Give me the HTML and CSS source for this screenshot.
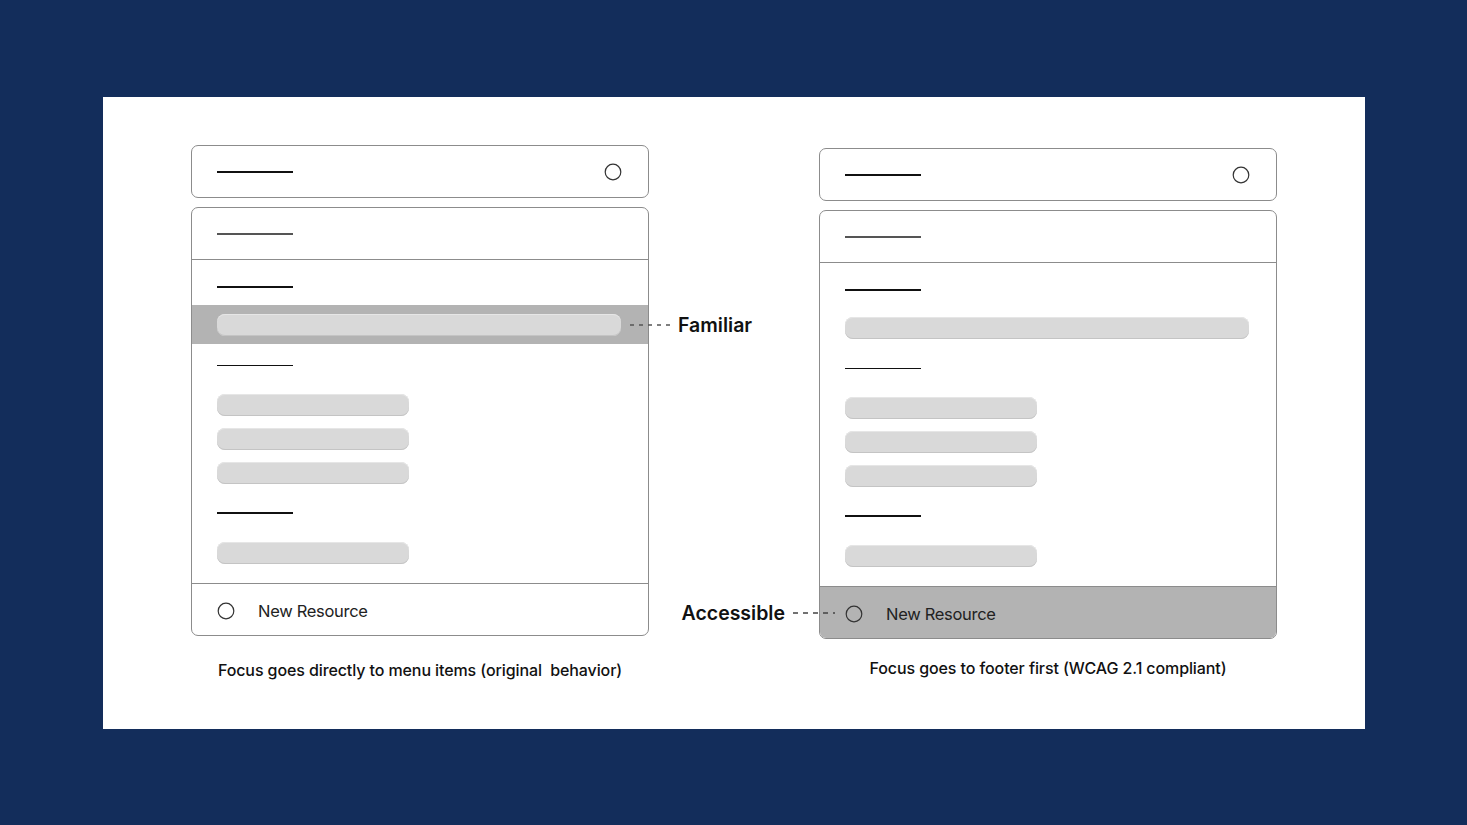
FILE: index.html
```html
<!DOCTYPE html>
<html lang="en">
<head>
<meta charset="utf-8">
<title>Focus order comparison</title>
<link rel="stylesheet" href="styles.css">
</head>
<body>
<main class="card">
  <section class="column">
    <div class="search">
      <span class="line"></span>
      <svg class="circle" width="18" height="18" viewBox="0 0 18 18"><circle cx="9" cy="9" r="7.8" fill="none" stroke="#333" stroke-width="1.2"/></svg>
    </div>
    <div class="menu">
      <div class="menu-head"><span class="line head-line"></span></div>
      <div class="menu-body">
        <span class="line label first"></span>
        <div class="row highlight">
          <span class="pill wide"></span>
          <div class="note note-right">
            <svg width="40" height="4" viewBox="0 0 40 4"><line x1="0" y1="2" x2="40" y2="2" stroke="#555" stroke-width="1.4" stroke-dasharray="4 5"/></svg>
            <span class="note-text">Familiar</span>
          </div>
        </div>
        <span class="line label second"></span>
        <div class="pills">
          <span class="pill"></span>
          <span class="pill"></span>
          <span class="pill"></span>
        </div>
        <span class="line label third"></span>
        <span class="pill last"></span>
      </div>
      <div class="menu-foot">
        <svg class="circle" width="18" height="18" viewBox="0 0 18 18"><circle cx="9" cy="9" r="7.8" fill="none" stroke="#333" stroke-width="1.2"/></svg>
        <span class="foot-text">New Resource</span>
      </div>
    </div>
    <p class="caption">Focus goes directly to menu items (original&nbsp; behavior)</p>
  </section>

  <section class="column right">
    <div class="search">
      <span class="line"></span>
      <svg class="circle" width="18" height="18" viewBox="0 0 18 18"><circle cx="9" cy="9" r="7.8" fill="none" stroke="#333" stroke-width="1.2"/></svg>
    </div>
    <div class="menu">
      <div class="menu-head"><span class="line head-line"></span></div>
      <div class="menu-body">
        <span class="line label first"></span>
        <div class="row">
          <span class="pill wide"></span>
        </div>
        <span class="line label second"></span>
        <div class="pills">
          <span class="pill"></span>
          <span class="pill"></span>
          <span class="pill"></span>
        </div>
        <span class="line label third"></span>
        <span class="pill last"></span>
      </div>
      <div class="menu-foot focused">
        <div class="note note-left">
          <span class="note-text">Accessible</span>
          <svg width="42" height="4" viewBox="0 0 42 4"><line x1="0" y1="2" x2="42" y2="2" stroke="#444" stroke-width="1.3" stroke-dasharray="5 5"/></svg>
        </div>
        <svg class="circle" width="18" height="18" viewBox="0 0 18 18"><circle cx="9" cy="9" r="7.8" fill="none" stroke="#333" stroke-width="1.2"/></svg>
        <span class="foot-text">New Resource</span>
      </div>
    </div>
    <p class="caption">Focus goes to footer first (WCAG 2.1 compliant)</p>
  </section>
</main>
</body>
</html>
```

FILE: styles.css
```css
* { box-sizing: border-box; }

html, body {
  margin: 0;
  padding: 0;
}

body {
  width: 1467px;
  height: 825px;
  background: #132d5b;
  font-family: Inter, "Noto Sans", sans-serif;
  padding: 97px 102px 96px 103px;
}

.card {
  width: 1262px;
  height: 632px;
  background: #ffffff;
  display: flex;
  gap: 170px;
  padding: 48px 88px 0 88px;
}

.column {
  width: 458px;
  display: flex;
  flex-direction: column;
}

.column.right {
  margin-top: 3px;
}

.search {
  height: 53px;
  border: 1px solid #8c8c8c;
  border-radius: 7px;
  display: flex;
  align-items: center;
  justify-content: space-between;
  padding: 0 26px 0 25px;
}

.line {
  display: block;
  width: 76px;
  height: 1.5px;
  background: #111;
}

.search .line {
  margin-top: 1px;
}

.menu {
  margin-top: 9px;
  height: 429px;
  border: 1px solid #8c8c8c;
  border-radius: 7px;
  display: flex;
  flex-direction: column;
}

.menu-head {
  height: 52px;
  border-bottom: 1px solid #8c8c8c;
  display: flex;
  align-items: center;
  padding: 0 0 0 25px;
}

.head-line {
  height: 2px;
  background: #555;
}

.menu-body {
  flex: 1;
  display: flex;
  flex-direction: column;
  padding: 0 0 0 25px;
}

.label.first { margin-top: 26px; }
.label.second { margin-top: 21px; }
.label.third { margin-top: 28px; }

.row {
  position: relative;
  margin-top: 17px;
  margin-left: -25px;
  height: 39px;
  padding: 9px 27px 0 25px;
}

.row.highlight {
  background: #b3b3b3;
}

.pill {
  display: block;
  width: 192px;
  height: 22px;
  background: #d9d9d9;
  border-radius: 8px;
  box-shadow: inset 0 -1px 0 #c4c4c4, inset 0 1px 0 #e6e6e6;
}

.pill.wide {
  width: 404px;
}

.pills {
  margin-top: 28px;
  display: flex;
  flex-direction: column;
  gap: 12px;
}

.pill.last {
  margin-top: 28px;
}

.menu-foot {
  position: relative;
  height: 52px;
  border-top: 1px solid #8c8c8c;
  display: flex;
  align-items: center;
  padding: 2px 0 0 25px;
  gap: 23px;
}

.menu-foot.focused {
  background: #b3b3b3;
  border-radius: 0 0 6px 6px;
}

.foot-text {
  font-size: 16.5px;
  color: #222;
  letter-spacing: -0.3px;
}

.circle {
  flex: none;
}

.caption {
  margin: 24px 0 0;
  text-align: center;
  font-size: 16px;
  font-weight: 500;
  color: #111;
  letter-spacing: -0.1px;
}

.column.right .caption {
  margin-top: 19px;
}

.note {
  position: absolute;
  display: flex;
  align-items: center;
  gap: 8px;
  top: 50%;
  transform: translateY(-50%);
}

.row .note {
  top: calc(50% + 1px);
}

.note-right {
  left: 438px;
}

.note-left {
  right: calc(100% - 15px);
}

.note-text {
  font-size: 19.5px;
  font-weight: 600;
  color: #111;
  white-space: nowrap;
}
```
